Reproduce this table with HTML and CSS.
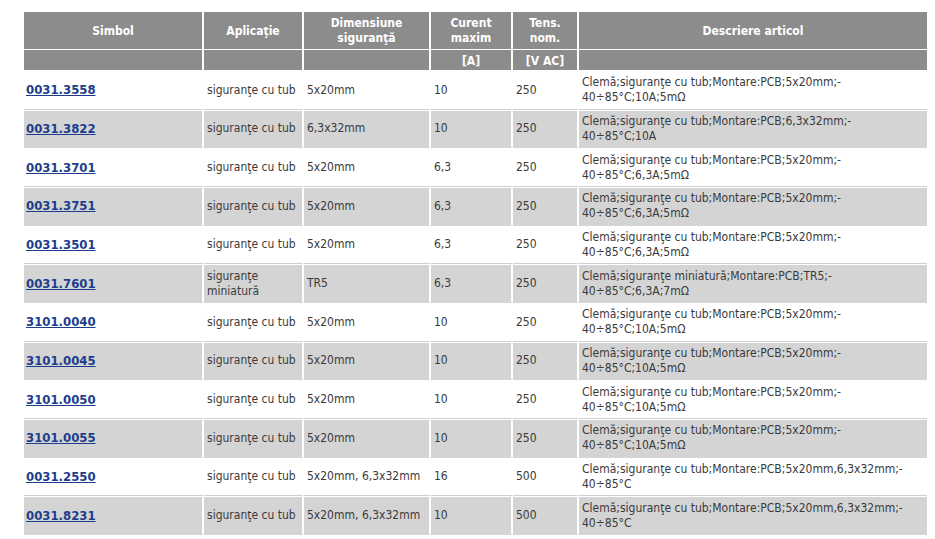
FILE: index.html
```html
<!DOCTYPE html>
<html lang="ro">
<head>
<meta charset="utf-8">
<title>Siguranțe</title>
<link rel="stylesheet" href="styles.css">
</head>
<body>
<div class="wrap">
<table class="grid">
  <colgroup>
    <col class="c1"><col class="c2"><col class="c3"><col class="c4"><col class="c5"><col class="c6">
  </colgroup>
  <thead>
    <tr class="h1">
      <th>Simbol</th>
      <th>Aplicaţie</th>
      <th>Dimensiune<br>siguranţă</th>
      <th>Curent<br>maxim</th>
      <th>Tens.<br>nom.</th>
      <th>Descriere articol</th>
    </tr>
    <tr class="h2">
      <th></th><th></th><th></th><th>[A]</th><th>[V AC]</th><th></th>
    </tr>
  </thead>
  <tbody>
    <tr><td><a href="#">0031.3558</a></td><td class="app">siguranţe cu tub</td><td>5x20mm</td><td>10</td><td>250</td><td>Clemă;siguranţe cu tub;Montare:PCB;5x20mm;-<br>40÷85°C;10A;5mΩ</td></tr>
    <tr class="alt"><td><a href="#">0031.3822</a></td><td class="app">siguranţe cu tub</td><td>6,3x32mm</td><td>10</td><td>250</td><td>Clemă;siguranţe cu tub;Montare:PCB;6,3x32mm;-<br>40÷85°C;10A</td></tr>
    <tr><td><a href="#">0031.3701</a></td><td class="app">siguranţe cu tub</td><td>5x20mm</td><td>6,3</td><td>250</td><td>Clemă;siguranţe cu tub;Montare:PCB;5x20mm;-<br>40÷85°C;6,3A;5mΩ</td></tr>
    <tr class="alt"><td><a href="#">0031.3751</a></td><td class="app">siguranţe cu tub</td><td>5x20mm</td><td>6,3</td><td>250</td><td>Clemă;siguranţe cu tub;Montare:PCB;5x20mm;-<br>40÷85°C;6,3A;5mΩ</td></tr>
    <tr><td><a href="#">0031.3501</a></td><td class="app">siguranţe cu tub</td><td>5x20mm</td><td>6,3</td><td>250</td><td>Clemă;siguranţe cu tub;Montare:PCB;5x20mm;-<br>40÷85°C;6,3A;5mΩ</td></tr>
    <tr class="alt"><td><a href="#">0031.7601</a></td><td class="app">siguranţe<br>miniatură</td><td>TR5</td><td>6,3</td><td>250</td><td>Clemă;siguranţe miniatură;Montare:PCB;TR5;-<br>40÷85°C;6,3A;7mΩ</td></tr>
    <tr><td><a href="#">3101.0040</a></td><td class="app">siguranţe cu tub</td><td>5x20mm</td><td>10</td><td>250</td><td>Clemă;siguranţe cu tub;Montare:PCB;5x20mm;-<br>40÷85°C;10A;5mΩ</td></tr>
    <tr class="alt"><td><a href="#">3101.0045</a></td><td class="app">siguranţe cu tub</td><td>5x20mm</td><td>10</td><td>250</td><td>Clemă;siguranţe cu tub;Montare:PCB;5x20mm;-<br>40÷85°C;10A;5mΩ</td></tr>
    <tr><td><a href="#">3101.0050</a></td><td class="app">siguranţe cu tub</td><td>5x20mm</td><td>10</td><td>250</td><td>Clemă;siguranţe cu tub;Montare:PCB;5x20mm;-<br>40÷85°C;10A;5mΩ</td></tr>
    <tr class="alt"><td><a href="#">3101.0055</a></td><td class="app">siguranţe cu tub</td><td>5x20mm</td><td>10</td><td>250</td><td>Clemă;siguranţe cu tub;Montare:PCB;5x20mm;-<br>40÷85°C;10A;5mΩ</td></tr>
    <tr><td><a href="#">0031.2550</a></td><td class="app">siguranţe cu tub</td><td>5x20mm, 6,3x32mm</td><td>16</td><td>500</td><td>Clemă;siguranţe cu tub;Montare:PCB;5x20mm,6,3x32mm;-<br>40÷85°C</td></tr>
    <tr class="alt"><td><a href="#">0031.8231</a></td><td class="app">siguranţe cu tub</td><td>5x20mm, 6,3x32mm</td><td>10</td><td>500</td><td>Clemă;siguranţe cu tub;Montare:PCB;5x20mm,6,3x32mm;-<br>40÷85°C</td></tr>
  </tbody>
</table>
</div>
</body>
</html>
```

FILE: styles.css
```css
html, body {
  margin: 0;
  padding: 0;
  background: #ffffff;
}

.wrap {
  padding: 12px 0 0 24px;
}

.grid {
  width: 903px;
  table-layout: fixed;
  border-collapse: separate;
  border-spacing: 0;
  font-family: "DejaVu Sans Condensed", "DejaVu Sans", Verdana, sans-serif;
  font-size: 12px;
  color: #3a3a3a;
}

.c1 { width: 180px; }
.c2 { width: 100px; }
.c3 { width: 127px; }
.c4 { width: 82px; }
.c5 { width: 66px; }
.c6 { width: 348px; }

.grid th,
.grid td {
  border-right: 2px solid #ffffff;
  box-sizing: border-box;
}

.grid th:last-child,
.grid td:last-child {
  border-right: 0;
}

.grid th {
  background: #8c8c8c;
  color: #ffffff;
  font-weight: bold;
  text-align: center;
  vertical-align: middle;
  line-height: 15px;
  padding: 1px 3px 0;
  border-bottom: 1px solid #ffffff;
}

.h1 th {
  height: 38px;
}

.h2 th {
  height: 21px;
  line-height: 17px;
  padding-top: 2px;
}

.grid td {
  text-align: left;
  vertical-align: middle;
  line-height: 15px;
  padding: 3px 2px 3px 3px;
  height: 38.67px;
  border-top: 1px solid #ffffff;
  border-bottom: 1px solid #cfcfcf;
  background: #ffffff;
}

.grid tr.alt td {
  background: #d4d4d4;
  border-bottom-color: #d4d4d4;
}

.grid td:first-child {
  padding-left: 2px;
}

.grid td a {
  color: #1c3d8c;
  font-weight: bold;
  font-size: 13px;
  text-decoration: underline;
}

.app {
  white-space: nowrap;
}
```
